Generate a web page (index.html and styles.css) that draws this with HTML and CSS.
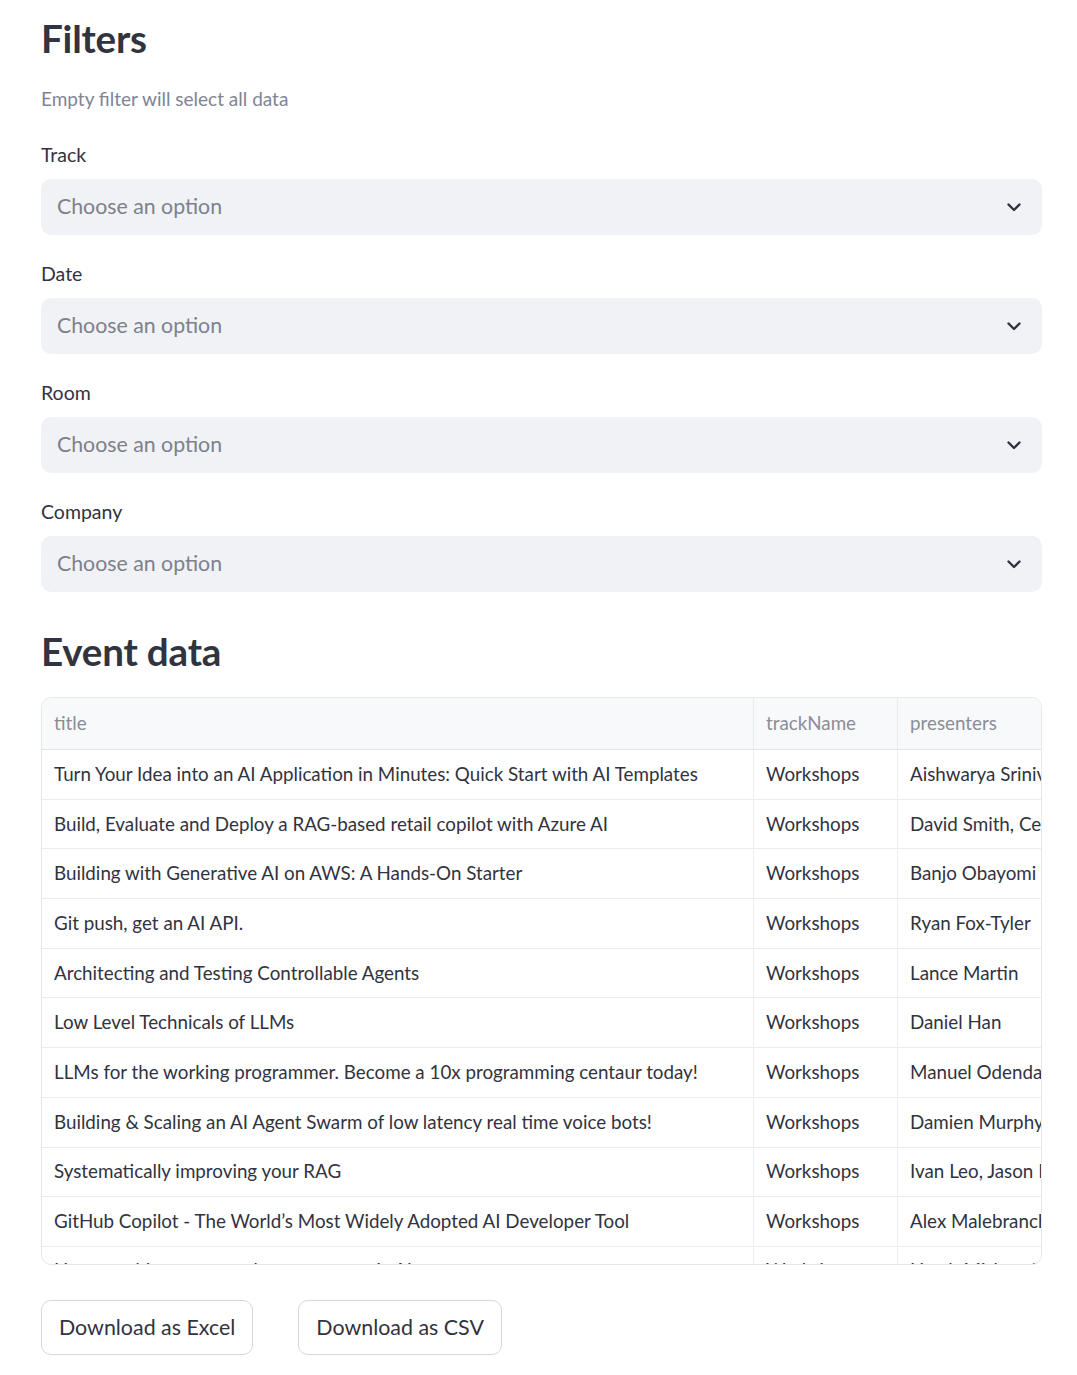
FILE: index.html
```html
<!DOCTYPE html>
<html lang="en">
<head>
<meta charset="utf-8">
<title>Filters</title>
<link rel="stylesheet" href="styles.css">
</head>
<body>
<main class="page">
  <h2 class="heading">Filters</h2>
  <p class="caption">Empty filter will select all data</p>

  <div class="field">
    <label class="label">Track</label>
    <div class="select"><span class="placeholder">Choose an option</span>
      <svg class="chev" width="16" height="16" viewBox="0 0 16 16"><polyline points="2.5,5.5 8,11 13.5,5.5" fill="none" stroke="#31333F" stroke-width="2.4" stroke-linecap="round" stroke-linejoin="round"/></svg>
    </div>
  </div>
  <div class="field">
    <label class="label">Date</label>
    <div class="select"><span class="placeholder">Choose an option</span>
      <svg class="chev" width="16" height="16" viewBox="0 0 16 16"><polyline points="2.5,5.5 8,11 13.5,5.5" fill="none" stroke="#31333F" stroke-width="2.4" stroke-linecap="round" stroke-linejoin="round"/></svg>
    </div>
  </div>
  <div class="field">
    <label class="label">Room</label>
    <div class="select"><span class="placeholder">Choose an option</span>
      <svg class="chev" width="16" height="16" viewBox="0 0 16 16"><polyline points="2.5,5.5 8,11 13.5,5.5" fill="none" stroke="#31333F" stroke-width="2.4" stroke-linecap="round" stroke-linejoin="round"/></svg>
    </div>
  </div>
  <div class="field">
    <label class="label">Company</label>
    <div class="select"><span class="placeholder">Choose an option</span>
      <svg class="chev" width="16" height="16" viewBox="0 0 16 16"><polyline points="2.5,5.5 8,11 13.5,5.5" fill="none" stroke="#31333F" stroke-width="2.4" stroke-linecap="round" stroke-linejoin="round"/></svg>
    </div>
  </div>

  <h2 class="heading heading-event">Event data</h2>

  <div class="grid">
    <div class="row head">
      <div class="cell c1">title</div>
      <div class="cell c2">trackName</div>
      <div class="cell c3">presenters</div>
    </div>
    <div class="row"><div class="cell c1">Turn Your Idea into an AI Application in Minutes: Quick Start with AI Templates</div><div class="cell c2">Workshops</div><div class="cell c3">Aishwarya Srinivasan</div></div>
    <div class="row"><div class="cell c1">Build, Evaluate and Deploy a RAG-based retail copilot with Azure AI</div><div class="cell c2">Workshops</div><div class="cell c3">David Smith, Cedric Vidal</div></div>
    <div class="row"><div class="cell c1">Building with Generative AI on AWS: A Hands-On Starter</div><div class="cell c2">Workshops</div><div class="cell c3">Banjo Obayomi</div></div>
    <div class="row"><div class="cell c1">Git push, get an AI API.</div><div class="cell c2">Workshops</div><div class="cell c3">Ryan Fox-Tyler</div></div>
    <div class="row"><div class="cell c1">Architecting and Testing Controllable Agents</div><div class="cell c2">Workshops</div><div class="cell c3">Lance Martin</div></div>
    <div class="row"><div class="cell c1">Low Level Technicals of LLMs</div><div class="cell c2">Workshops</div><div class="cell c3">Daniel Han</div></div>
    <div class="row"><div class="cell c1">LLMs for the working programmer. Become a 10x programming centaur today!</div><div class="cell c2">Workshops</div><div class="cell c3">Manuel Odendahl</div></div>
    <div class="row"><div class="cell c1">Building &amp; Scaling an AI Agent Swarm of low latency real time voice bots!</div><div class="cell c2">Workshops</div><div class="cell c3">Damien Murphy</div></div>
    <div class="row"><div class="cell c1">Systematically improving your RAG</div><div class="cell c2">Workshops</div><div class="cell c3">Ivan Leo, Jason Liu</div></div>
    <div class="row"><div class="cell c1">GitHub Copilot - The World’s Most Widely Adopted AI Developer Tool</div><div class="cell c2">Workshops</div><div class="cell c3">Alex Malebranche</div></div>
    <div class="row"><div class="cell c1">How to add memory and state to agentic AI systems</div><div class="cell c2">Workshops</div><div class="cell c3">Harsh Mishra, Jay</div></div>
  </div>

  <div class="buttons">
    <button class="btn">Download as Excel</button>
    <button class="btn">Download as CSV</button>
  </div>
</main>
</body>
</html>
```
FILE: styles.css
```css
* { box-sizing: border-box; }
html, body { margin: 0; padding: 0; background: #ffffff; }
body {
  font-family: "Source Sans Pro", Lato, "Noto Sans", sans-serif;
  color: #31333F;
}
.page {
  width: 1001px;
  margin-left: 41px;
  padding-top: 14px;
  padding-bottom: 20px;
}
.heading {
  margin: 0;
  font-size: 38.6px;
  line-height: 48px;
  font-weight: 700;
  color: #31333F;
  letter-spacing: -0.2px;
}
.caption {
  margin: 23px 0 0 0;
  font-size: 19px;
  line-height: 28px;
  color: #808495;
}
.field {
  display: flex;
  flex-direction: column;
  gap: 10px;
  margin-top: 25px;
}
.caption + .field { margin-top: 28px; }
.label {
  display: block;
  font-size: 19.5px;
  line-height: 28px;
  color: #31333F;
}
.select {
  height: 56px;
  background: #F0F2F6;
  border-radius: 10px;
  display: flex;
  align-items: center;
  justify-content: space-between;
  padding: 0 20px 2px 16px;
}
.placeholder {
  font-size: 21.3px;
  color: #7E818B;
}
.chev { display: block; margin-top: 2px; }
.heading-event { margin-top: 35px; }
.grid {
  margin-top: 22px;
  height: 568px;
  overflow: hidden;
  border: 1px solid #E6E7EA;
  border-radius: 10px;
}
.row {
  display: flex;
  height: 49.7px;
  border-bottom: 1px solid #EBECEE;
}
.row.head {
  height: 52px;
  background: #F8F9FB;
  color: #8B8D95;
  border-bottom: 1px solid #E3E4E8;
}
.cell {
  display: flex;
  align-items: center;
  padding: 0 12px 2px 12px;
  font-size: 18.8px;
  white-space: nowrap;
  overflow: hidden;
}
.row:not(.head) .cell { color: #31333F; }
.row:last-child .cell { padding-bottom: 4px; }
.c1 { width: 712px; border-right: 1px solid #EBECEE; }
.c2 { width: 144px; border-right: 1px solid #EBECEE; }
.c3 { flex: 1; padding-right: 0; }
.buttons {
  display: flex;
  gap: 45px;
  margin-top: 35px;
}
.btn {
  height: 55px;
  padding: 0 17px 2px 17px;
  background: #ffffff;
  border: 1px solid #D6D7DA;
  border-radius: 10px;
  font-family: inherit;
  font-size: 21.4px;
  color: #31333F;
  cursor: pointer;
}
```
